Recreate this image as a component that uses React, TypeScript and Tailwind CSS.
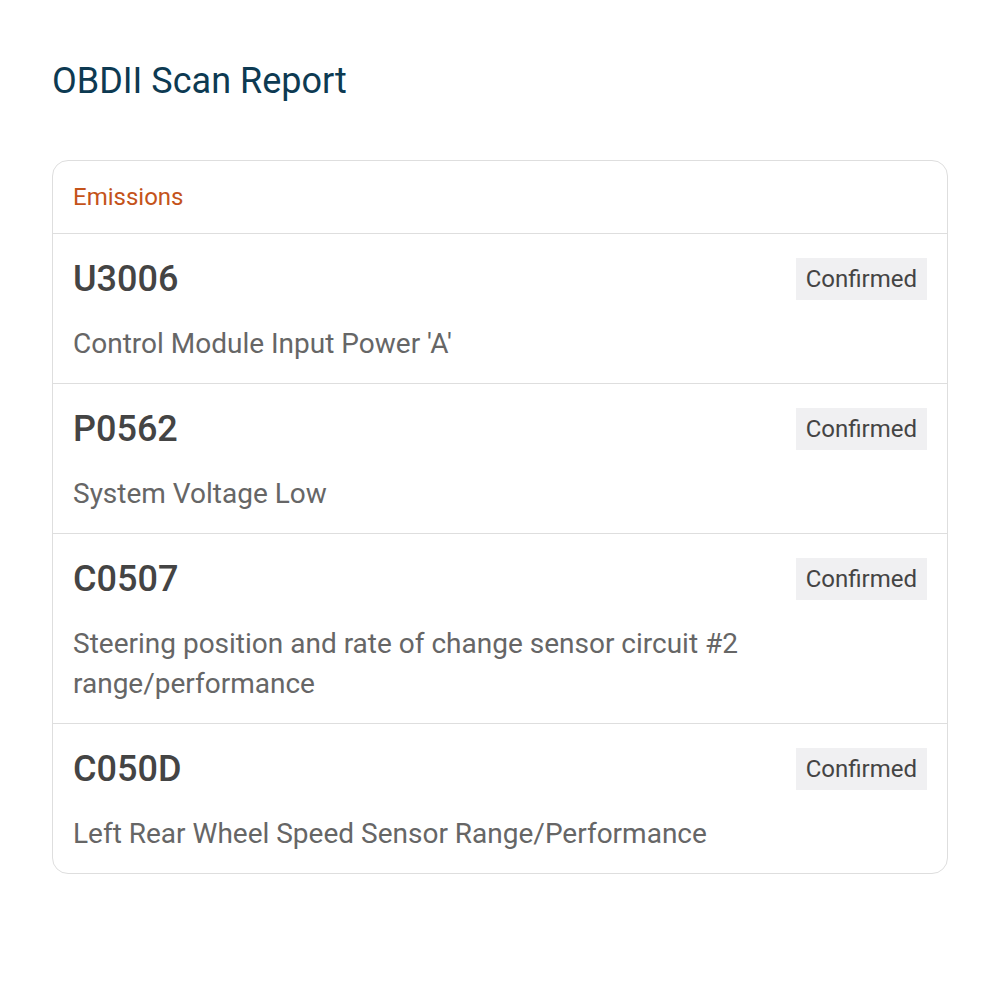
import React from "react";

const items = [
  { code: "U3006", desc: "Control Module Input Power 'A'" },
  { code: "P0562", desc: "System Voltage Low" },
  { code: "C0507", desc: "Steering position and rate of change sensor circuit #2 range/performance" },
  { code: "C050D", desc: "Left Rear Wheel Speed Sensor Range/Performance" },
];

export default function App() {
  return (
    <div className="min-h-[1000px] bg-white px-[52px] pt-[59px]" style={{ fontFamily: "Roboto, sans-serif" }}>
      <h1 className="text-[36px] leading-[44px] text-[#0d3a52]">OBDII Scan Report</h1>
      <div className="mt-[57px] rounded-[16px] border border-[#dedede]">
        <div className="border-b border-[#dedede] px-[20px] h-[73px] flex items-center text-[24px] text-[#c4531a]">Emissions</div>
        {items.map((it, i) => (
          <div key={it.code} className={"px-[20px] pt-[24px] pb-[19px] " + (i < items.length - 1 ? "border-b border-[#dedede]" : "")}>
            <div className="flex items-start justify-between">
              <div className="text-[36px] leading-[42px] font-medium text-[#444444]">{it.code}</div>
              <div className="bg-[#f0f0f2] h-[42px] px-[10px] flex items-center text-[24px] text-[#444444]">Confirmed</div>
            </div>
            <div className="mt-[24px] text-[28px] leading-[40px] text-[#666666]">{it.desc}</div>
          </div>
        ))}
      </div>
    </div>
  );
}
